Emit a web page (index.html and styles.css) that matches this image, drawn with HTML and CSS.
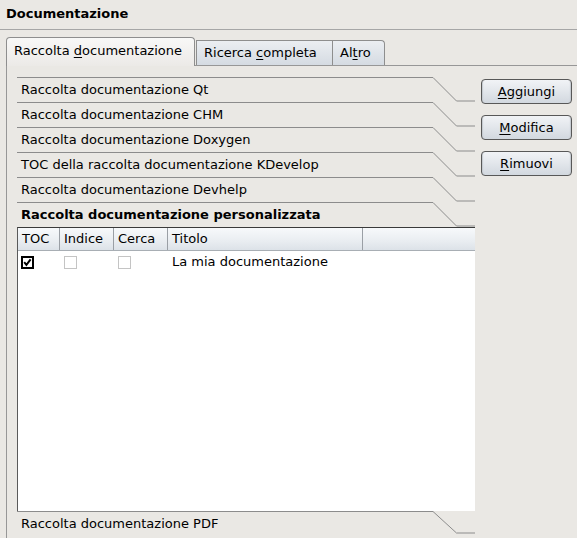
FILE: index.html
```html
<!DOCTYPE html>
<html>
<head>
<meta charset="utf-8">
<link rel="stylesheet" href="styles.css">
</head>
<body>
<div class="title">Documentazione</div>
<div class="tabs">
  <div class="tab tab-sel">Raccolta <u>d</u>ocumentazione</div>
  <div class="tab tab-mid">Ricerca <u>c</u>ompleta</div>
  <div class="tab tab-last">Al<u>t</u>ro</div>
</div>
<div class="panel">
  <div class="toolbox">
    <div class="tb-head"><div class="tb-label">Raccolta documentazione Qt</div><svg class="tb-slant" width="42" height="25"><polyline points="0,0.5 23.5,24 42,24" /></svg></div>
    <div class="tb-head"><div class="tb-label">Raccolta documentazione CHM</div><svg class="tb-slant" width="42" height="25"><polyline points="0,0.5 23.5,24 42,24" /></svg></div>
    <div class="tb-head"><div class="tb-label">Raccolta documentazione Doxygen</div><svg class="tb-slant" width="42" height="25"><polyline points="0,0.5 23.5,24 42,24" /></svg></div>
    <div class="tb-head"><div class="tb-label">TOC della raccolta documentazione KDevelop</div><svg class="tb-slant" width="42" height="25"><polyline points="0,0.5 23.5,24 42,24" /></svg></div>
    <div class="tb-head"><div class="tb-label">Raccolta documentazione Devhelp</div><svg class="tb-slant" width="42" height="25"><polyline points="0,0.5 23.5,24 42,24" /></svg></div>
    <div class="tb-head"><div class="tb-label tb-bold">Raccolta documentazione personalizzata</div><svg class="tb-slant" width="42" height="25"><polyline points="0,0.5 23.5,24 42,24" /></svg></div>
    <div class="list">
      <div class="list-head">
        <div class="hcell">TOC</div>
        <div class="hcell">Indice</div>
        <div class="hcell">Cerca</div>
        <div class="hcell">Titolo</div>
        <div class="hcell hcell-last"></div>
      </div>
      <div class="list-row">
        <div class="cell cell-first"><svg width="13" height="13" class="cb"><rect x="1" y="1" width="11" height="11" fill="#fff" stroke="#000" stroke-width="2"/><path d="M3.2 6.2 L5.4 8.8 L9.6 3.4" fill="none" stroke="#000" stroke-width="2"/></svg></div>
        <div class="cell"><svg width="13" height="13" class="cb"><rect x="0.5" y="0.5" width="12" height="12" fill="#fff" stroke="#c4c4c4"/></svg></div>
        <div class="cell"><svg width="13" height="13" class="cb"><rect x="0.5" y="0.5" width="12" height="12" fill="#fff" stroke="#c4c4c4"/></svg></div>
        <div class="cell cell-text">La mia documentazione</div>
        <div class="cell"></div>
      </div>
    </div>
    <div class="tb-head"><div class="tb-label">Raccolta documentazione PDF</div><svg class="tb-slant" width="42" height="25"><polyline points="0,0.5 23.5,22 42,22" /></svg></div>
  </div>
  <div class="buttons">
    <div class="btn"><u>A</u>ggiungi</div>
    <div class="btn"><u>M</u>odifica</div>
    <div class="btn"><u>R</u>imuovi</div>
  </div>
</div>
</body>
</html>
```
FILE: styles.css
```css
html, body {
  margin: 0;
  padding: 0;
}
body {
  width: 577px;
  height: 538px;
  overflow: hidden;
  background: #eae8e4;
  font-family: "DejaVu Sans", sans-serif;
  font-size: 13px;
  color: #000;
  display: flex;
  flex-direction: column;
}
u {
  text-decoration: underline;
  text-underline-offset: 2px;
}
.title {
  height: 30px;
  box-sizing: border-box;
  padding: 6px 6px 0;
  line-height: 16px;
  font-weight: bold;
  border-bottom: 1px solid #a6a6a6;
}
.tabs {
  display: flex;
  align-items: flex-end;
  margin-top: 7px;
  padding-left: 6px;
  height: 28px;
  position: relative;
  z-index: 1;
}
.tab {
  box-sizing: border-box;
  padding-left: 7px;
  white-space: nowrap;
  border: 1px solid #8e8e8e;
  border-bottom: none;
}
.tab-sel {
  width: 189px;
  height: 29px;
  margin-bottom: -1px;
  line-height: 26px;
  border-radius: 4px 4px 0 0;
  background: linear-gradient(#f8f8f7, #eceae7);
}
.tab-mid {
  width: 137px;
  height: 25px;
  margin-left: 1px;
  line-height: 23px;
  background: linear-gradient(#ebeef2, #d5dbe2);
}
.tab-last {
  width: 53px;
  height: 25px;
  margin-left: -1px;
  line-height: 23px;
  border-radius: 0 4px 0 0;
  background: linear-gradient(#ebeef2, #d5dbe2);
}
.panel {
  flex: 1;
  margin-left: 6px;
  border-top: 1px solid #979797;
  border-left: 1px solid #979797;
  padding: 11px 0 0 10px;
  display: flex;
  gap: 6px;
}
.toolbox {
  width: 458px;
  display: flex;
  flex-direction: column;
}
.tb-head {
  display: flex;
  height: 25px;
  flex: none;
}
.tb-label {
  flex: 1;
  border-top: 1px solid #8c8c8c;
  padding-left: 4px;
  line-height: 24px;
  white-space: nowrap;
}
.tb-bold {
  font-weight: bold;
}
.tb-slant {
  flex: none;
  display: block;
}
.tb-slant polyline {
  fill: none;
  stroke: #8c8c8c;
  stroke-width: 1;
}
.list {
  height: 284px;
  box-sizing: border-box;
  background: #fff;
  border-top: 1px solid #3a3a3a;
  border-left: 1px solid #5a5a5a;
  flex: none;
}
.list-head, .list-row {
  display: grid;
  grid-template-columns: 42px 54px 54px 195px 1fr;
}
.list-head {
  height: 23px;
  box-sizing: border-box;
  border-bottom: 1px solid #a8aeb4;
  background: linear-gradient(#f7f9fb, #e9edf1 60%, #dce2e8);
}
.hcell {
  border-right: 1px solid #9a9fa5;
  padding-left: 4px;
  line-height: 22px;
  white-space: nowrap;
}
.hcell-last {
  border-right: none;
}
.list-row {
  height: 22px;
}
.cell {
  padding-left: 4px;
  line-height: 22px;
  white-space: nowrap;
}
.cell-first {
  padding-left: 3px;
}
.cb {
  display: block;
  margin-top: 5px;
}
.cell-text {
  padding-left: 4px;
}
.buttons {
  width: 91px;
  margin-top: 2px;
  display: flex;
  flex-direction: column;
  gap: 11px;
}
.btn {
  height: 25px;
  box-sizing: border-box;
  border: 1px solid #585858;
  border-radius: 4px;
  background: linear-gradient(#f1f3f6, #e2e6eb 50%, #d2d8df);
  box-shadow: inset 2px 0 1px -1px #c4c9cf, inset -2px 0 1px -1px #c4c9cf;
  text-align: center;
  line-height: 23px;
}
```
